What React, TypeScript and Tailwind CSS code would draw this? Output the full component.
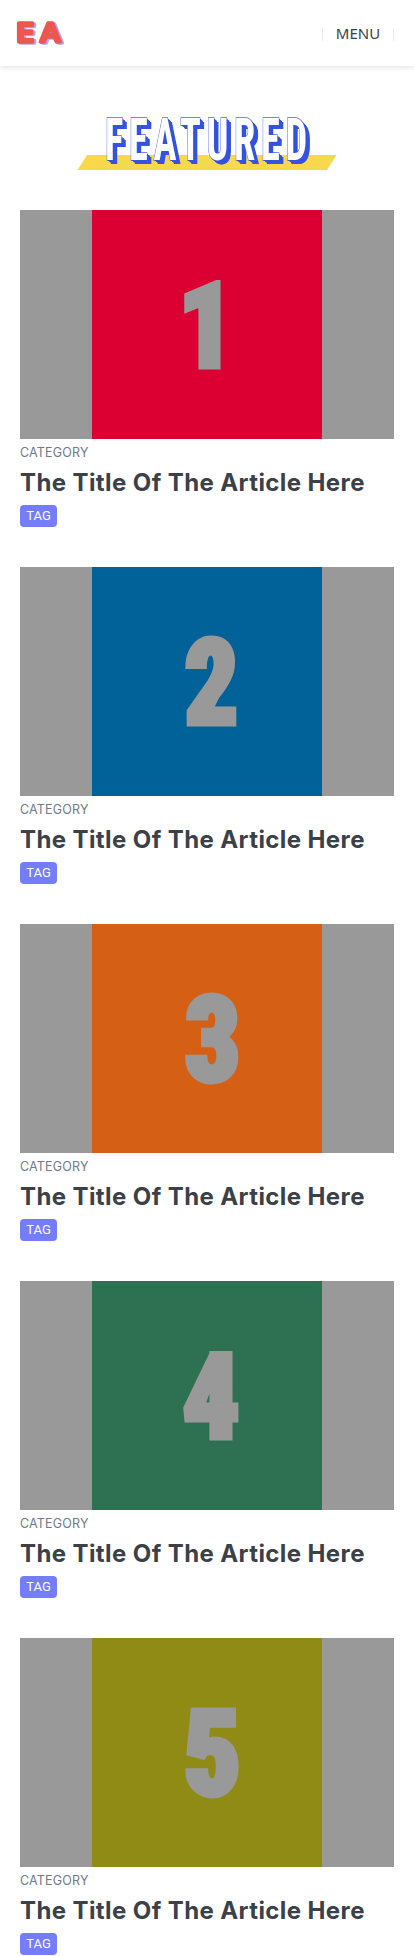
const articles = [
  { n: "1", color: "bg-[#dc0032]", x: 114, sx: 0.92 },
  { n: "2", color: "bg-[#006298]", x: 119.5, sx: 0.89 },
  { n: "3", color: "bg-[#d45f15]", x: 120.5, sx: 0.92 },
  { n: "4", color: "bg-[#2d7152]", x: 119, sx: 0.96 },
  { n: "5", color: "bg-[#8f8b14]", x: 120.5, sx: 0.95 },
];

function Logo() {
  return (
    <svg width="60" height="42" viewBox="10 12 60 42" aria-label="EA" className="ml-2.5">
      <g
        className="fill-[#ed574e] stroke-[#ed574e] stroke-[3.4] font-['Inter'] text-[25.5px] font-medium drop-shadow-[2.4px_1.7px_0_#a9a9fb]"
        strokeLinejoin="round"
      >
        <text transform="translate(16.6 42) scale(1.15 1)">E</text>
        <text transform="translate(39.8 42) scale(1.17 1)">A</text>
      </g>
    </svg>
  );
}

function Banner() {
  return (
    <div className="mx-auto grid h-[64px] w-[270px]">
      <svg width="270" height="64" viewBox="72 112 270 64" className="col-start-1 row-start-1">
        <polygon points="87,155 336.5,155 327,170 77.5,170" fill="#fad84c" />
      </svg>
      <h1 className="col-start-1 row-start-1 mt-px ml-[32.5px] h-[54px] w-[206px] origin-left scale-x-[0.64] text-[60px] leading-[54px] font-bold tracking-[8.9px] whitespace-nowrap text-white font-['Roboto',sans-serif] [font-stretch:75%] [-webkit-text-stroke:1.4px_#4a65e2] [paint-order:stroke_fill] [text-shadow:1px_0.6px_0_#3454df,2px_1.2px_0_#3454df,3px_1.8px_0_#3454df,4px_2.4px_0_#3454df,5px_3px_0_#3454df,6px_3.6px_0_#3454df,7px_4.2px_0_#3454df]">
        FEATURED
      </h1>
    </div>
  );
}

export default function App() {
  return (
    <div className="h-[1956px] w-[414px] overflow-hidden bg-white font-['Inter',sans-serif]">
      <header className="flex h-[66px] items-center justify-between bg-white shadow-[0_1px_6px_rgba(0,0,0,0.13)]">
        <Logo />
        <nav className="mr-5 mt-[3px] flex h-[13px] w-[72px] items-center justify-center border-x border-[#e9edf2] pb-[2px] font-['Noto_Sans',sans-serif] text-[15px] text-[#3b4148]">
          MENU
        </nav>
      </header>
      <div className="flex h-[144px] pt-[46px]">
        <Banner />
      </div>
      <main className="px-5">
        {articles.map((a) => (
          <article key={a.n} className="h-[357px]">
            <div className="flex h-[229.4px] justify-center bg-[#999999]">
              <div className={`w-[229.4px] ${a.color}`}>
                <svg width="229" height="229" viewBox="0 0 229 229">
                  <text
                    textAnchor="middle"
                    transform={`translate(${a.x} 156.5) scale(${a.sx} 1)`}
                    className="fill-[#999999] stroke-[#999999] stroke-5 font-['Roboto'] text-[118.5px] font-black [font-stretch:75%]"
                  >
                    {a.n}
                  </text>
                </svg>
              </div>
            </div>
            <p className="mt-1 text-[12.5px] leading-5 tracking-[0.2px] text-[#71798a]">CATEGORY</p>
            <h2 className="mt-[3px] whitespace-nowrap text-2xl leading-[34px] font-bold tracking-[0.4px] text-[#3b4148]">
              The Title Of The Article Here
            </h2>
            <span className="mt-[5px] flex h-[22px] w-[37px] items-center justify-center rounded-[4px] bg-[#757dff] pb-px font-['Roboto',sans-serif] text-[13px] leading-none text-white">
              TAG
            </span>
          </article>
        ))}
      </main>
    </div>
  );
}
